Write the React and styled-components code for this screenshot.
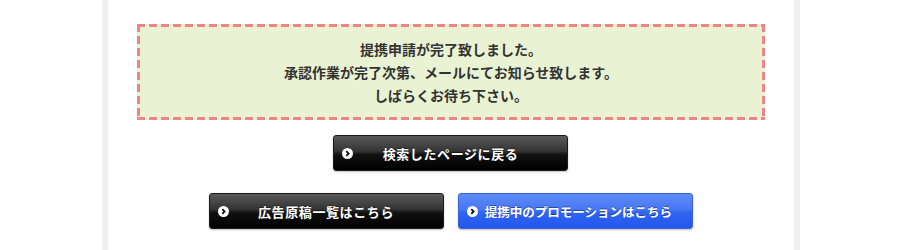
import React from "react";
import styled, { createGlobalStyle } from "styled-components";

const GlobalStyle = createGlobalStyle`
    body {
        margin: 0;
        background: #fff;
        font-family: "Noto Sans CJK JP", "Noto Sans", sans-serif;
    }
`

function ArrowIcon() {
    return (
        <svg width="11" height="11" viewBox="0 0 11 11">
            <circle cx="5.5" cy="5.5" r="5.5" fill="#fff" />
            <path d="M4.3 3.2 L6.6 5.5 L4.3 7.8" fill="none" stroke="#111" strokeWidth="1.8" />
        </svg>
    )
}

function LinkButton(props) {
    return (
        <Button variant={props.variant} tight={props.tight}>
            <IconSpot><ArrowIcon /></IconSpot>
            <Label>{props.children}</Label>
        </Button>
    )
}

function App() {
    return (
        <Page>
            <GlobalStyle />
            <Frame>
                <Notice>
                    <p>提携申請が完了致しました。</p>
                    <p>承認作業が完了次第、メールにてお知らせ致します。</p>
                    <p>しばらくお待ち下さい。</p>
                </Notice>
                <ButtonRow first>
                    <LinkButton variant="black">検索したページに戻る</LinkButton>
                </ButtonRow>
                <ButtonRow>
                    <LinkButton variant="black">広告原稿一覧はこちら</LinkButton>
                    <LinkButton variant="blue" tight>提携中のプロモーションはこちら</LinkButton>
                </ButtonRow>
            </Frame>
        </Page>
    )
}

const dash = "#ec8585"

const Page = styled.div`
    width: 900px;
    height: 250px;
    overflow: hidden;
`

const Frame = styled.div`
    width: 628px;
    height: 250px;
    margin-left: 102px;
    border-left: 6px solid #f0f0f0;
    border-right: 6px solid #f0f0f0;
    padding: 24px 29px 0 29px;
    box-sizing: content-box;
    display: flex;
    flex-direction: column;
`

const Notice = styled.div`
    background:
        repeating-linear-gradient(90deg, ${dash} 0 8px, transparent 8px 12px) top left / 100% 3px no-repeat,
        repeating-linear-gradient(90deg, ${dash} 0 8px, transparent 8px 12px) bottom left / 100% 3px no-repeat,
        repeating-linear-gradient(180deg, ${dash} 0 8px, transparent 8px 12px) top left / 3px 100% no-repeat,
        repeating-linear-gradient(180deg, ${dash} 0 8px, transparent 8px 12px) top right / 3px 100% no-repeat,
        #e9f3d4;
    padding: 14px 10px 13px;
    text-align: center;
    color: #333;
    font-size: 14px;
    font-weight: bold;
    line-height: 23px;

    p {
        margin: 0;
    }
`

const ButtonRow = styled.div`
    display: flex;
    justify-content: center;
    gap: 14px;
    margin-top: ${props => props.first ? "15px" : "22px"};
    padding-right: 1px;
`

const Button = styled.a`
    position: relative;
    width: 235px;
    height: 36px;
    box-sizing: border-box;
    border-radius: 3px;
    display: flex;
    align-items: center;
    justify-content: center;
    padding-left: ${props => props.tight ? "7px" : "0"};
    color: #fff;
    font-size: ${props => props.tight ? "12.5px" : "13px"};
    font-weight: bold;
    letter-spacing: ${props => props.tight ? "0" : "0.6px"};
    cursor: pointer;
    border: 1px solid ${props => props.variant === "blue" ? "#3a63d6" : "#1a1a1a"};
    background: ${props => props.variant === "blue"
        ? "linear-gradient(#5f8cf8 0%, #4777f4 45%, #2f63f0 55%, #2458ee 100%)"
        : "linear-gradient(#5a5a5a 0%, #333 45%, #111 55%, #000 100%)"};
    box-shadow: 0 1px 2px rgba(0, 0, 0, 0.25);
    text-shadow: 0 -1px 0 rgba(0, 0, 0, 0.4);
`

const IconSpot = styled.span`
    position: absolute;
    left: 8px;
    top: 12px;
    display: flex;
`

const Label = styled.span`
    white-space: nowrap;
`

export default App;
